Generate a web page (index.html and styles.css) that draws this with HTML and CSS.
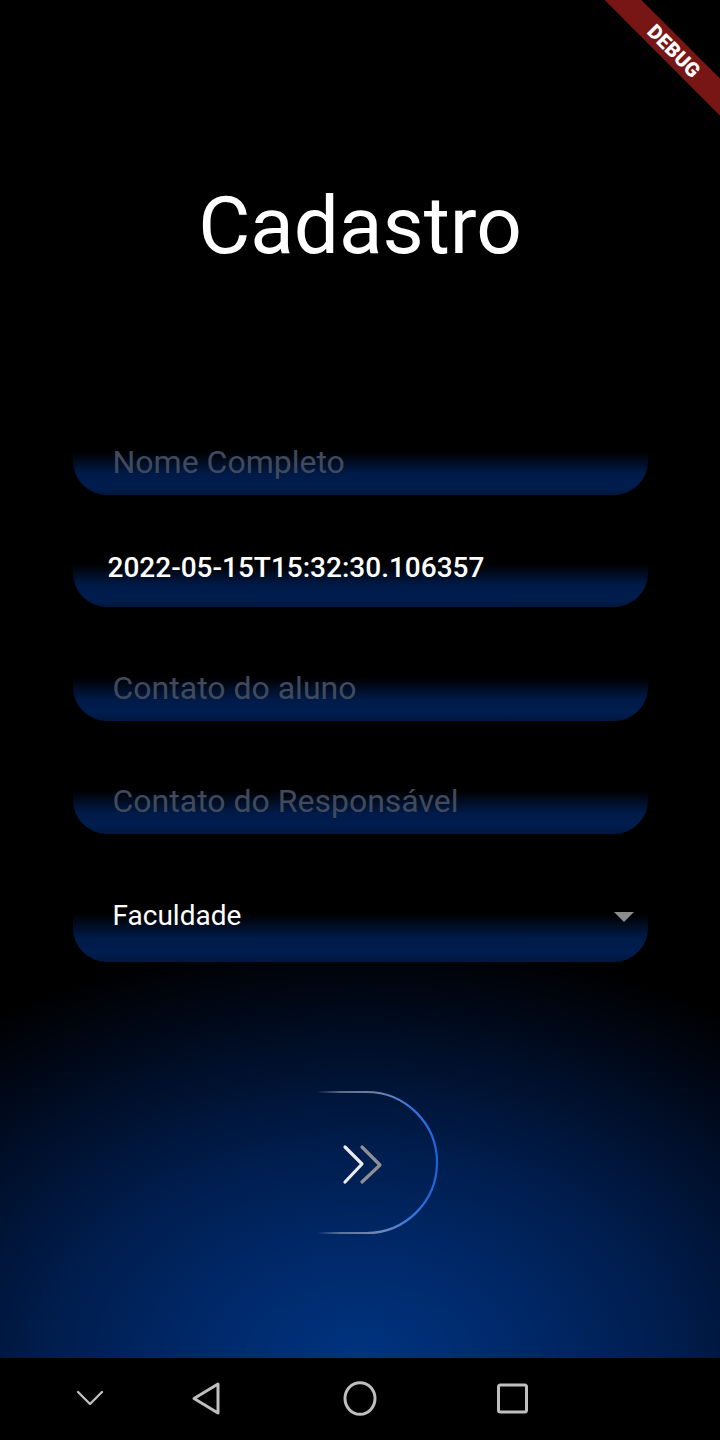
FILE: index.html
```html
<!DOCTYPE html>
<html lang="pt">
<head>
<meta charset="utf-8">
<title>Cadastro</title>
<link rel="stylesheet" href="styles.css">
</head>
<body>
<div class="screen">
  <h1 class="title">Cadastro</h1>
  <form class="form">
    <div class="field f1"><span class="hint">Nome Completo</span></div>
    <div class="field f2"><span class="value">2022-05-15T15:32:30.106357</span></div>
    <div class="field f3"><span class="hint">Contato do aluno</span></div>
    <div class="field f4"><span class="hint">Contato do Responsável</span></div>
    <div class="field f5"><span class="value select">Faculdade</span><span class="caret"></span></div>
  </form>
  <div class="action">
    <svg class="next" width="250" height="146" viewBox="0 0 250 146">
      <defs>
        <linearGradient id="ring" gradientUnits="userSpaceOnUse" x1="2" y1="0" x2="202" y2="0">
          <stop offset="0" stop-color="#c8ccd8" stop-opacity="0"/>
          <stop offset="0.4" stop-color="#c8ccd8" stop-opacity="0"/>
          <stop offset="0.52" stop-color="#b8bfd0" stop-opacity="0.5"/>
          <stop offset="0.7" stop-color="#9fb0d8" stop-opacity="0.7"/>
          <stop offset="0.86" stop-color="#3b78e0"/>
          <stop offset="1" stop-color="#1f63d8"/>
        </linearGradient>
      </defs>
      <rect x="2" y="2" width="200" height="141" rx="70.5" ry="70.5" fill="none" stroke="url(#ring)" stroke-width="2.2"/>
      <polyline points="110,57 127,74 110,92" fill="none" stroke="#ececec" stroke-width="3.2" stroke-linecap="round" stroke-linejoin="round"/>
      <polyline points="127,57 145,75 127,92" fill="none" stroke="#8f8f95" stroke-width="3.2" stroke-linecap="round" stroke-linejoin="round"/>
    </svg>
  </div>
</div>
<nav class="navbar">
  <svg class="nav-icon i-hide" width="40" height="40" viewBox="0 0 40 40"><polyline points="8,13 20,25 32,13" fill="none" stroke="#bfbfbf" stroke-width="2.4" stroke-linecap="round" stroke-linejoin="round"/></svg>
  <svg class="nav-icon i-back" width="40" height="40" viewBox="0 0 40 40"><polygon points="32,5 8,19.5 32,34" fill="none" stroke="#bfbfbf" stroke-width="3" stroke-linejoin="round"/></svg>
  <svg class="nav-icon i-home" width="40" height="40" viewBox="0 0 40 40"><ellipse cx="20" cy="19.5" rx="15" ry="15.8" fill="none" stroke="#bfbfbf" stroke-width="3"/></svg>
  <svg class="nav-icon i-recent" width="40" height="40" viewBox="0 0 40 40"><rect x="6.5" y="6" width="28" height="27" rx="2" fill="none" stroke="#bfbfbf" stroke-width="3"/></svg>
</nav>
<div class="debug">DEBUG</div>
</body>
</html>
```
FILE: styles.css
```css
html, body {
  margin: 0;
  padding: 0;
  width: 720px;
  height: 1440px;
  overflow: hidden;
  background: #000;
}

body {
  position: relative;
  font-family: Roboto, "Noto Sans", sans-serif;
}

.screen {
  height: 1358px;
  box-sizing: border-box;
  padding-top: 184px;
  display: flex;
  flex-direction: column;
  align-items: center;
  background: radial-gradient(ellipse 620px 420px at 50% 100%, #00337f 0%, #00296a 25%, #001d4d 50%, #000c22 78%, #000000 100%);
}

.title {
  margin: 0;
  font-size: 80px;
  font-weight: 400;
  line-height: 84px;
  color: #ffffff;
}

.form {
  margin-top: 157px;
  width: 575px;
  display: flex;
  flex-direction: column;
}

.field {
  height: 70px;
  box-sizing: border-box;
  border-radius: 0 0 34px 34px;
  background: linear-gradient(to bottom, rgba(0, 27, 72, 0) 0%, rgba(0, 27, 72, 0) 38%, #001b49 70%, #001d4e 88%, #00173e 100%);
  display: flex;
  align-items: flex-start;
}

.f1 { margin-top: 0; }
.f2 { margin-top: 42px; }
.f3 { margin-top: 44px; }
.f4 { margin-top: 43px; }
.f5 {
  margin-top: 50px;
  height: 78px;
  justify-content: space-between;
  padding-right: 14px;
}

.hint {
  padding: 18px 0 0 40px;
  font-size: 32px;
  line-height: 38px;
  color: #404a5c;
}

.value {
  padding: 14px 0 0 35px;
  font-size: 28px;
  line-height: 34px;
  font-weight: 500;
  color: #ffffff;
}

.select {
  padding: 15px 0 0 40px;
  font-weight: 400;
}

.caret {
  margin-top: 28px;
  width: 0;
  height: 0;
  border-left: 10px solid transparent;
  border-right: 10px solid transparent;
  border-top: 10px solid #8c8c8c;
}

.action {
  margin-top: 128px;
  display: flex;
  justify-content: center;
}

.next {
  display: block;
}

.navbar {
  height: 82px;
  background: #000;
  display: flex;
  align-items: center;
  padding-left: 70px;
}

.nav-icon { display: block; }
.i-back { margin-left: 76px; }
.i-home { margin-left: 114px; }
.i-recent { margin-left: 112px; }

.debug {
  position: absolute;
  left: 574px;
  top: 38px;
  width: 200px;
  height: 26px;
  transform: rotate(45deg);
  background: #781616;
  color: #ffffff;
  font-size: 20px;
  font-weight: 900;
  line-height: 26px;
  text-align: center;
  letter-spacing: 0.3px;
}
```
